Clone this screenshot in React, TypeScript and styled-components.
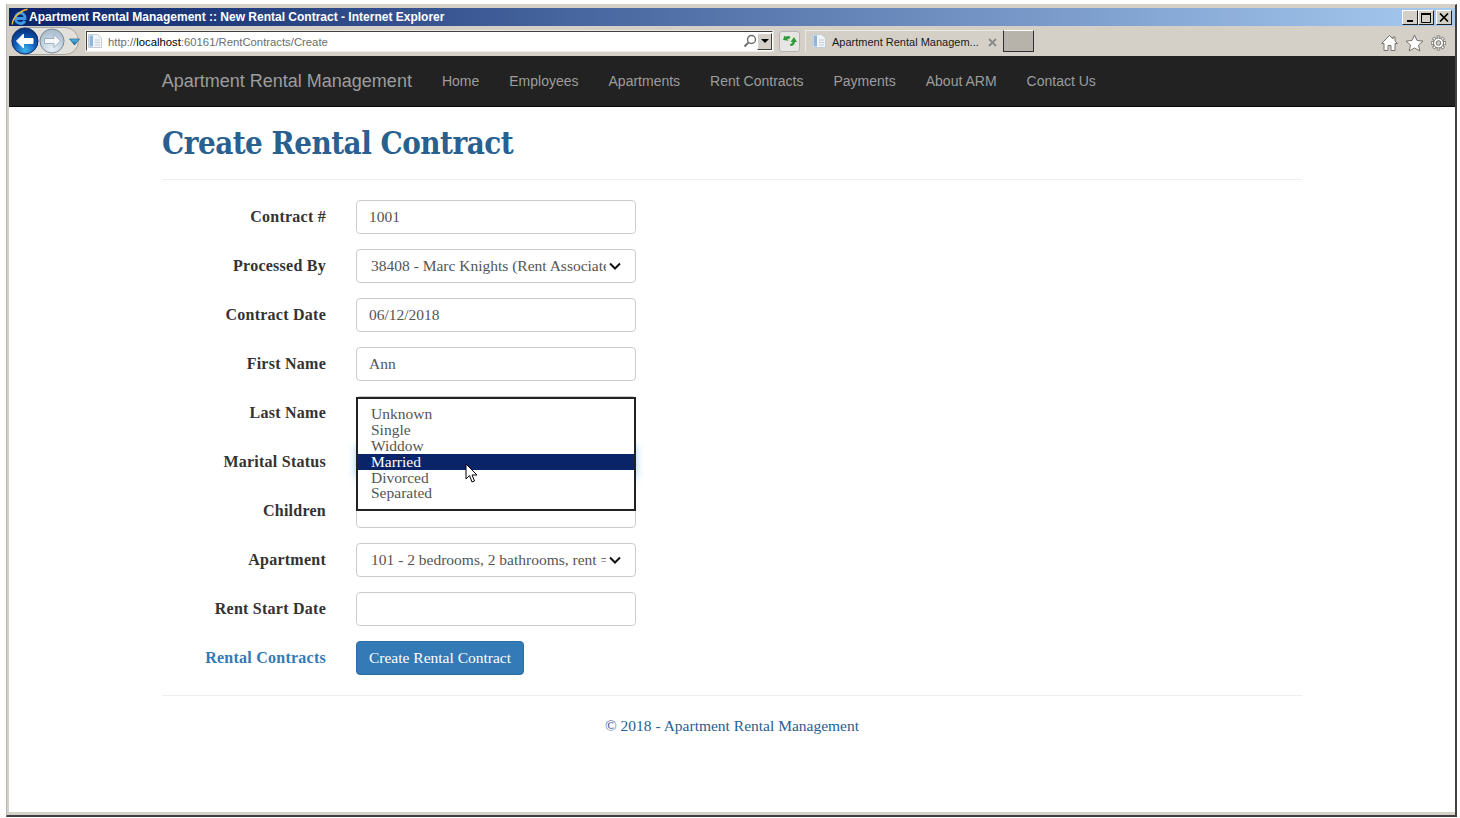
import styled, { createGlobalStyle } from 'styled-components';

const GlobalStyle = createGlobalStyle`
  html, body {
    margin: 0;
    padding: 0;
    background: #ffffff;
    overflow: hidden;
  }
  * { box-sizing: border-box; }
`
const Screen = styled.div`
  width: 1460px;
  height: 818px;
  padding: 4px 3px 1px 6px;
  background: #ffffff;
`
const Window = styled.div`
  height: 813px;
  display: flex;
  flex-direction: column;
  background: #d4d0c8;
  border-top: 1px solid #d4d0c8;
  border-left: 1px solid #b9b6ae;
  border-right: 2px solid #404040;
  border-bottom: 2px solid #404040;
  padding: 3px 0 3px 2px;
`
const TitleBar = styled.div`
  height: 18px;
  flex: none;
  display: flex;
  align-items: center;
  justify-content: space-between;
  padding: 0 3px 0 2px;
  background: linear-gradient(to right, #0a246a, #a6caf0);
`
const TitleText = styled.div`
  display: flex;
  align-items: center;
  color: #ffffff;
  font: bold 12px "Liberation Sans", Arial, sans-serif;
`
const WindowButtons = styled.div`
  display: flex;
  margin-top: 1px;
`
const WindowButton = styled.div<{ $gap?: boolean }>`
  width: 16px;
  height: 15px;
  margin-left: ${props => props.$gap ? '2px' : '0'};
  display: flex;
  align-items: center;
  justify-content: center;
  background: #d4d0c8;
  border: 1px solid;
  border-color: #ffffff #202020 #202020 #ffffff;
`
const Toolbar = styled.div`
  height: 30px;
  flex: none;
  display: flex;
  align-items: center;
  padding-left: 2px;
  background: #d4d0c8;
`
const AddressBar = styled.div`
  width: 687px;
  height: 20px;
  flex: none;
  margin-left: 5px;
  display: flex;
  align-items: center;
  background: #ffffff;
  border: 1px solid;
  border-color: #404040 #ffffff #ffffff #404040;
  box-shadow: 0 0 0 1px #ece9e2;
`
const AddressText = styled.div`
  flex: 1;
  color: #6d6d6d;
  font: 11.3px "Liberation Sans", Arial, sans-serif;
  margin-left: 5px;
  padding-top: 2px;
  b {
    font-weight: normal;
    color: #000000;
  }
`
const DropButton = styled.div`
  width: 15px;
  height: 17px;
  display: flex;
  align-items: center;
  justify-content: center;
  background: #d4d0c8;
  border: 1px solid;
  border-color: #ffffff #404040 #404040 #ffffff;
`
const RefreshButton = styled.div`
  width: 21px;
  height: 21px;
  flex: none;
  margin-left: 6px;
  display: flex;
  align-items: center;
  justify-content: center;
  background: #e8e6e2;
  border: 1px solid #b4b4b8;
  border-radius: 3px;
`
const Tab = styled.div`
  width: 198px;
  height: 22px;
  flex: none;
  margin-left: 5px;
  padding: 0 5px 0 5px;
  display: flex;
  align-items: center;
  gap: 5px;
  background: #d4d0c8;
  border: 1px solid;
  border-color: #ece9e2 transparent transparent #ece9e2;
  color: #1a1a1a;
  font: 11px "Liberation Sans", Arial, sans-serif;
`
const TabTitle = styled.span`
  flex: 1;
  white-space: nowrap;
  padding-top: 2px;
`
const NewTab = styled.div`
  width: 31px;
  height: 22px;
  flex: none;
  background: #b7b3ab;
  border: 1px solid;
  border-color: #ffffff #303030 #303030 #303030;
`
const ToolIcons = styled.div`
  margin-left: auto;
  margin-right: 7px;
  margin-top: 4px;
  display: flex;
  gap: 5.5px;
`
const Navbar = styled.nav`
  height: 51px;
  flex: none;
  padding-left: 152.75px;
  display: flex;
  align-items: center;
  background: #222222;
  border-bottom: 1px solid #080808;
  font-family: "Liberation Sans", Arial, sans-serif;
`
const Brand = styled.a`
  color: #9d9d9d;
  font-size: 18px;
  margin-right: 30px;
`
const NavLink = styled.a`
  color: #9d9d9d;
  font-size: 14px;
  margin-right: 30px;
`
const Content = styled.main`
  flex: 1;
  background: #ffffff;
  padding: 0 153px;
  font-family: "Liberation Serif", "Times New Roman", serif;
`
const Inner = styled.div`
  width: 1140px;
`
const Heading = styled.h2`
  margin: 0;
  padding-top: 19px;
  height: 73px;
  border-bottom: 1px solid #eeeeee;
  color: #286090;
  font-size: 31px;
  line-height: 34px;
  font-weight: bold;
  font-family: "DejaVu Serif", Georgia, serif;
  font-stretch: condensed;
  letter-spacing: -0.5px;
`
const Form = styled.div`
  padding-top: 20px;
  display: flex;
  flex-direction: column;
  gap: 15px;
`
const Row = styled.div`
  height: 34px;
  display: flex;
  align-items: center;
`
const Label = styled.div`
  width: 164px;
  margin-right: 30px;
  text-align: right;
  color: #333333;
  font-size: 16px;
  font-weight: bold;
  letter-spacing: 0.25px;
`
const LinkLabel = styled(Label)`
  color: #337ab7;
`
const Field = styled.div<{ $focus?: boolean }>`
  width: 280px;
  height: 34px;
  padding: 0 12px;
  display: flex;
  align-items: center;
  background: #ffffff;
  border: 1px solid ${props => props.$focus ? '#66afe9' : '#cccccc'};
  border-radius: 4px;
  box-shadow: ${props => props.$focus ? '0 0 8px rgba(102, 175, 233, 0.6)' : 'none'};
  color: #555555;
  font-size: 15.5px;
  position: relative;
`
const SelectField = styled(Field)`
  padding: 0 14px 0 14px;
  justify-content: space-between;
`
const SelectValue = styled.span`
  width: 235px;
  overflow: hidden;
  white-space: nowrap;
`
const DropList = styled.div`
  position: absolute;
  left: -1px;
  top: 0;
  z-index: 2;
  width: 280px;
  height: 114px;
  padding-top: 7px;
  background: #ffffff;
  border: 2px solid #222222;
  color: #555555;
  font-size: 15.5px;
  line-height: 16px;
`
const DropItem = styled.div<{ $active?: boolean; $last?: boolean }>`
  height: 16px;
  padding-left: 13px;
  margin-top: ${props => props.$last ? '-1px' : '0'};
  background: ${props => props.$active ? '#0a246a' : 'transparent'};
  color: ${props => props.$active ? '#ffffff' : '#555555'};
`
const Cursor = styled.svg`
  position: absolute;
  left: 108px;
  top: 66px;
  z-index: 3;
`
const SubmitButton = styled.button`
  width: 168px;
  height: 34px;
  padding: 0;
  background: #337ab7;
  border: 1px solid #2e6da4;
  border-radius: 4px;
  color: #ffffff;
  font-size: 15.5px;
  font-family: "Liberation Serif", "Times New Roman", serif;
`
const Rule = styled.hr`
  margin: 20px 0 0;
  border: 0;
  border-top: 1px solid #eeeeee;
`
const Footer = styled.p`
  margin: 21px 0 0;
  text-align: center;
  color: #286090;
  font-size: 15.5px;
`

const NavGroup = () => (
  <svg width="70" height="30" viewBox="0 0 70 30" style={{ flex: 'none' }}>
    <defs>
      <radialGradient id="back" cx="50%" cy="85%" r="80%">
        <stop offset="0%" stopColor="#3fb4ee" />
        <stop offset="55%" stopColor="#0f59b4" />
        <stop offset="100%" stopColor="#0a3580" />
      </radialGradient>
      <radialGradient id="fwd" cx="50%" cy="85%" r="80%">
        <stop offset="0%" stopColor="#e6f0f8" />
        <stop offset="100%" stopColor="#a9bccd" />
      </radialGradient>
      <linearGradient id="drop" x1="0" y1="0" x2="0" y2="1">
        <stop offset="0%" stopColor="#5cc4ec" />
        <stop offset="100%" stopColor="#0f5f98" />
      </linearGradient>
    </defs>
    <path d="M14 1.500h40a13.500 13.500 0 0 1 0 27H14a13.500 13.500 0 0 1 0-27z" fill="#e3e1dc" stroke="#a8a59e" />
    <circle cx="41" cy="15" r="12" fill="url(#fwd)" stroke="#7f8a96" />
    <path d="M49.500 15l-6.500-6.500v4h-9.500v5H43v4z" fill="#f6f8fa" stroke="#8ea3b8" strokeWidth="0.8" strokeLinejoin="round" />
    <circle cx="14" cy="15" r="13" fill="url(#back)" stroke="#0a2f70" />
    <path d="M5.500 15l7-7v4.500h9.500v5h-9.500V22z" fill="#ffffff" strokeLinejoin="round" stroke="#ffffff" />
    <path d="M58.500 13h10l-5 6z" fill="url(#drop)" stroke="#0f4f80" strokeWidth="0.6" />
  </svg>
)

const IeLogo = () => (
  <svg width="18" height="18" viewBox="0 0 18 18">
    <path d="M4.500 10.500h9.500C14 6.500 11.500 5 9.500 5 6.500 5 4.500 7.500 4.500 10.500S6.500 15.500 9.500 15.500c2 0 3.500-1 4.300-2.500" fill="none" stroke="#3d9be6" strokeWidth="2.800" />
    <path d="M1.500 16.500C.5 11 9 2.500 16.500 1.200" fill="none" stroke="#f3b92c" strokeWidth="1.500" />
  </svg>
)

const PageIcon = () => (
  <svg width="16" height="16" viewBox="0 0 16 16">
    <path d="M1.500 1.500h9l4 3.500v9.500h-13z" fill="#f0f3f7" stroke="#c6ccd3" />
    <path d="M2.500 2.500h3.500v11H2.500z" fill="#8fb5dc" />
    <path d="M8 7h5M8 9.500h5M8 12h5" stroke="#c6ccd3" />
  </svg>
)

const SearchIcon = () => (
  <svg width="14" height="14" viewBox="0 0 14 14">
    <circle cx="8.500" cy="5.500" r="4" fill="none" stroke="#6f6f6f" strokeWidth="1.400" />
    <path d="M5.500 8.500L1.500 12.500" stroke="#6f6f6f" strokeWidth="2" />
  </svg>
)

const RefreshIcon = () => (
  <svg width="16" height="14" viewBox="0 0 16 14">
    <path d="M1 6l1.500-4.500 1.300 1.500C5 1.800 7 1.700 8.500 3L7 5.200C6.300 4.700 5.800 4.700 5.300 5l1.400 1.700z" fill="#2f9a3a" />
    <path d="M12 3l3 5h-2c-.3 2.500-2.500 4.500-5 4l.6-2.500c1 .2 1.700-.4 1.900-1.500H8.500z" fill="#2f9a3a" />
  </svg>
)

const HomeIcon = () => (
  <svg width="19" height="18" viewBox="0 0 19 18">
    <path d="M9.500 1.500L1.500 9.500h2.500v7h4v-5h3v5h4v-7h2.500l-2.500-2.500V3h-2v2z" fill="#ffffff" stroke="#77736c" strokeWidth="1" strokeLinejoin="round" />
  </svg>
)

const StarIcon = () => (
  <svg width="19" height="18" viewBox="0 0 19 18">
    <path d="M9.500 1l2.500 5.500 6 .6-4.500 4 1.300 5.900-5.300-3.100L4.200 17l1.300-5.900L1 7.100l6-.6z" fill="#ffffff" stroke="#77736c" strokeWidth="1" strokeLinejoin="round" />
  </svg>
)

const GearIcon = () => (
  <svg width="19" height="18" viewBox="0 0 19 18">
    <path d="M9.500 1.500v15M2 9h15M4.200 3.700l10.600 10.600M14.800 3.700L4.200 14.300" stroke="#77736c" strokeWidth="3.400" />
    <path d="M9.500 2.200v13.600M2.700 9h13.600M4.700 4.200l9.600 9.600M14.300 4.200l-9.600 9.600" stroke="#ffffff" strokeWidth="1.800" />
    <circle cx="9.500" cy="9" r="5" fill="#ffffff" stroke="#77736c" />
    <circle cx="9.500" cy="9" r="2.300" fill="#d4d0c8" stroke="#77736c" />
  </svg>
)

const Chevron = () => (
  <svg width="12" height="8" viewBox="0 0 12 8" style={{ flex: 'none' }}>
    <path d="M1 1.500L6 6.500l5-5" fill="none" stroke="#111111" strokeWidth="2" />
  </svg>
)

const fields = [
  { label: 'Contract #', value: '1001' },
  { label: 'Processed By', value: '38408 - Marc Knights (Rent Associate)', select: true },
  { label: 'Contract Date', value: '06/12/2018' },
  { label: 'First Name', value: 'Ann' },
  { label: 'Last Name', value: '', list: true },
  { label: 'Marital Status', value: '', focus: true },
  { label: 'Children', value: '' },
  { label: 'Apartment', value: '101 - 2 bedrooms, 2 bathrooms, rent = $1150/month', select: true },
  { label: 'Rent Start Date', value: '' },
]
const links = ['Home', 'Employees', 'Apartments', 'Rent Contracts', 'Payments', 'About ARM', 'Contact Us']
const statuses = ['Unknown', 'Single', 'Widdow', 'Married', 'Divorced', 'Separated']

const App = () => {
  return (
    <Screen>
      <GlobalStyle />
      <Window>
        <TitleBar>
          <TitleText>
            <IeLogo />
            Apartment Rental Management :: New Rental Contract - Internet Explorer
          </TitleText>
          <WindowButtons>
            <WindowButton>
              <svg width="9" height="9" viewBox="0 0 9 9"><path d="M1 7h6v2H1z" /></svg>
            </WindowButton>
            <WindowButton>
              <svg width="10" height="10" viewBox="0 0 10 10"><path d="M.5 1.500h9v8h-9z" fill="none" stroke="#000" /><path d="M0 1h10" stroke="#000" strokeWidth="2" /></svg>
            </WindowButton>
            <WindowButton $gap>
              <svg width="10" height="9" viewBox="0 0 10 9"><path d="M1 .5l8 8M9 .5l-8 8" stroke="#000" strokeWidth="1.700" /></svg>
            </WindowButton>
          </WindowButtons>
        </TitleBar>
        <Toolbar>
          <NavGroup />
          <AddressBar>
            <PageIcon />
            <AddressText>http://<b>localhost</b>:60161/RentContracts/Create</AddressText>
            <SearchIcon />
            <DropButton>
              <svg width="8" height="4" viewBox="0 0 8 4"><path d="M0 0h8L4 4z" /></svg>
            </DropButton>
          </AddressBar>
          <RefreshButton><RefreshIcon /></RefreshButton>
          <Tab>
            <PageIcon />
            <TabTitle>Apartment Rental Managem...</TabTitle>
            <svg width="9" height="9" viewBox="0 0 9 9" style={{ marginTop: 2 }}><path d="M1 1l7 7M8 1L1 8" stroke="#8a8a8a" strokeWidth="1.800" /></svg>
          </Tab>
          <NewTab />
          <ToolIcons>
            <HomeIcon />
            <StarIcon />
            <GearIcon />
          </ToolIcons>
        </Toolbar>
        <Navbar>
          <Brand>Apartment Rental Management</Brand>
          {links.map(link => <NavLink key={link}>{link}</NavLink>)}
        </Navbar>
        <Content>
          <Inner>
            <Heading>Create Rental Contract</Heading>
            <Form>
              {fields.map(field => (
                <Row key={field.label}>
                  <Label>{field.label}</Label>
                  {field.select ? (
                    <SelectField>
                      <SelectValue>{field.value}</SelectValue>
                      <Chevron />
                    </SelectField>
                  ) : (
                    <Field $focus={field.focus}>
                      {field.value}
                      {field.list && (
                        <>
                          <DropList>
                            {statuses.map((status, i) => (
                              <DropItem key={status} $active={status === 'Married'} $last={i === statuses.length - 1}>{status}</DropItem>
                            ))}
                          </DropList>
                          <Cursor width="14" height="21" viewBox="0 0 14 21">
                            <path d="M1 1v15l3.500-3.500L7 19l2.500-1-2.500-6h5z" fill="#ffffff" stroke="#000000" strokeWidth="1" />
                          </Cursor>
                        </>
                      )}
                    </Field>
                  )}
                </Row>
              ))}
              <Row>
                <LinkLabel>Rental Contracts</LinkLabel>
                <SubmitButton>Create Rental Contract</SubmitButton>
              </Row>
            </Form>
            <Rule />
            <Footer>© 2018 - Apartment Rental Management</Footer>
          </Inner>
        </Content>
      </Window>
    </Screen>
  )
}

export default App;
